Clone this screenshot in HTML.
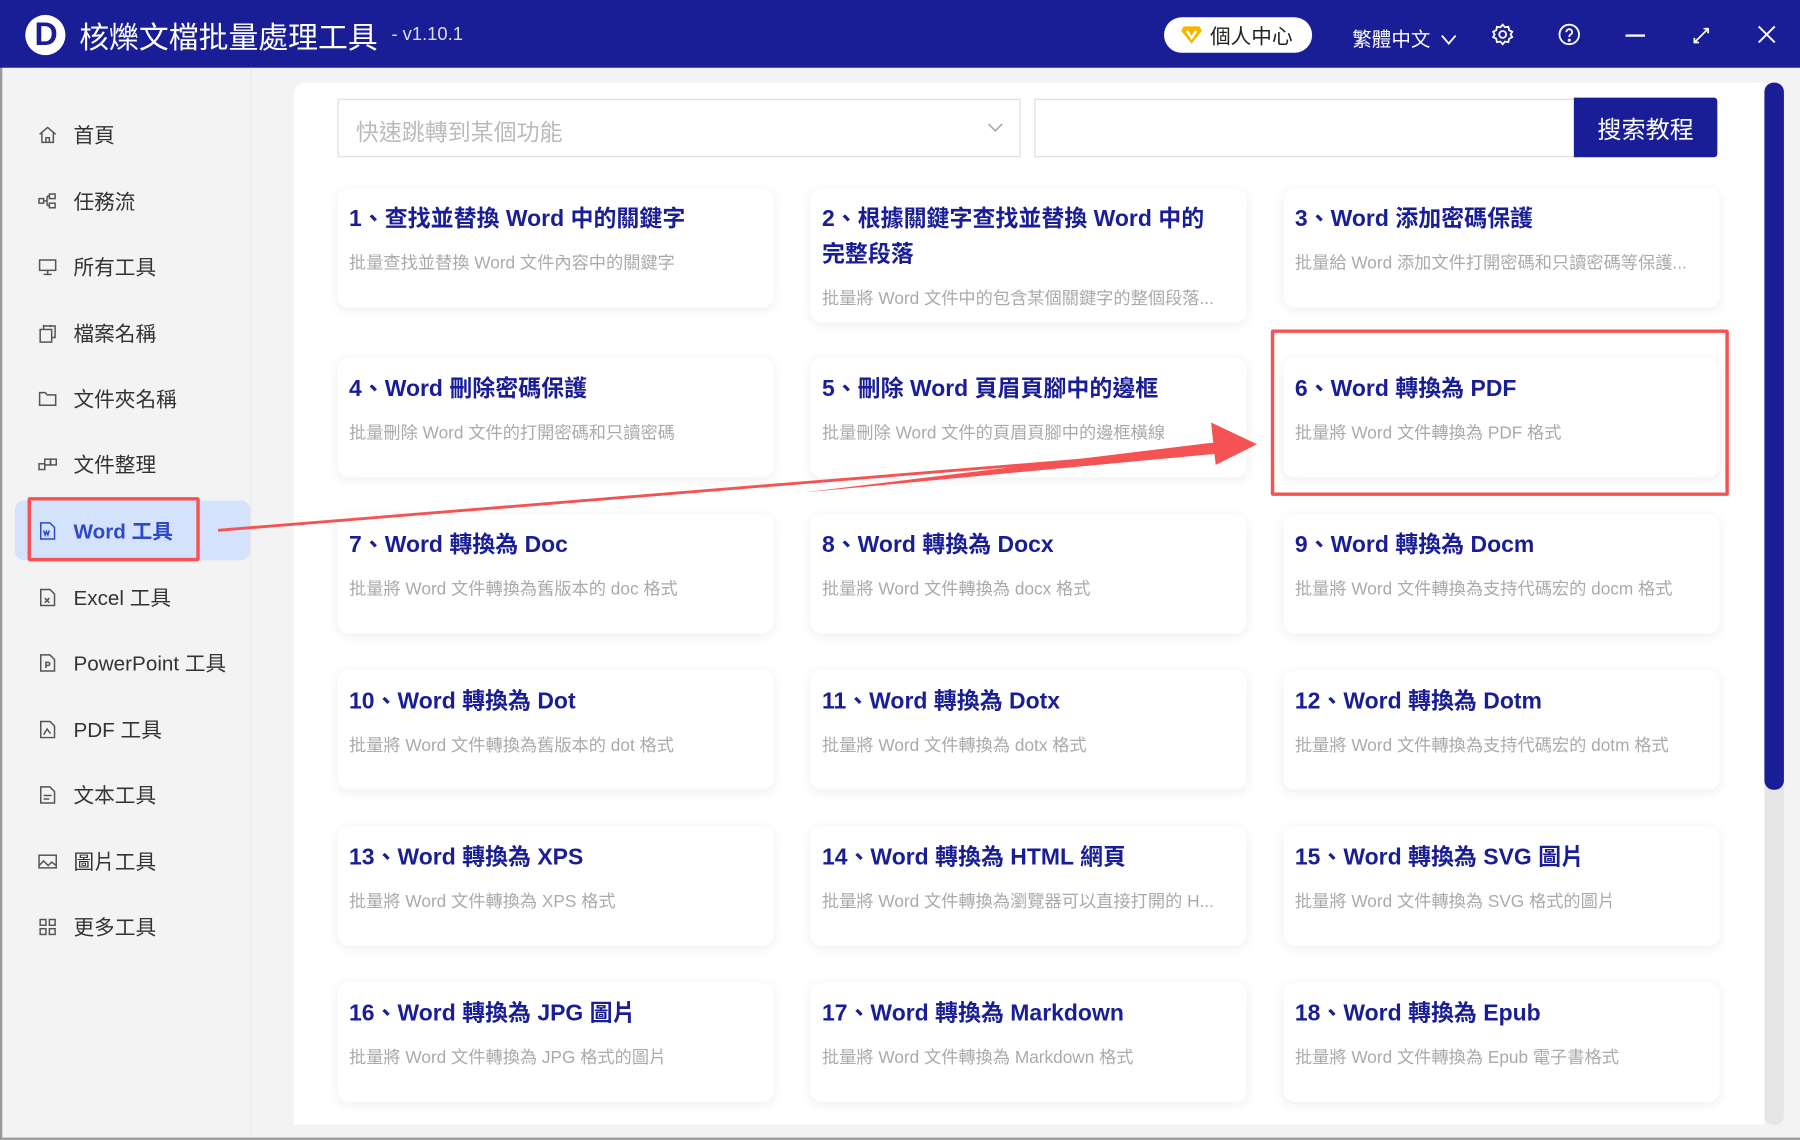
<!DOCTYPE html>
<html><head><meta charset="utf-8">
<style>
*{margin:0;padding:0;box-sizing:border-box}
html,body{width:1800px;height:1140px;overflow:hidden;background:#fff}
#w{width:1568px;height:993px;transform:scale(1.14796);transform-origin:0 0;position:relative;background:#f3f3f3;font-family:"Liberation Sans","Noto Sans CJK TC",sans-serif;box-shadow:inset 2px -2px 0 #999}
.hd{position:absolute;left:0;top:0;width:1568px;height:59px;background:#1a1e96;color:#fff}
.logo{position:absolute;left:22px;top:13px;width:35px;height:35px;border-radius:50%;background:#fff;}
.logo:after{content:"D";position:absolute;left:8px;top:1px;font:bold 28px "Liberation Sans",sans-serif;color:#1a1e96}
.ttl{position:absolute;left:69px;top:13px;font-size:26px}
.ver{position:absolute;left:341px;top:22px;font-size:16px;color:#dde}
.pill{position:absolute;left:1014px;top:15px;width:129px;height:31px;border-radius:16px;background:#fff;color:#222;font-size:18px;padding:3px 0 0 40px}
.pill svg{position:absolute;left:15px;top:7px}
.lang{position:absolute;left:1178px;top:20px;font-size:17px}
.sb{position:absolute;left:0;top:59px;width:219px;height:930px;border-right:1px solid #e8e8e8}
.it{position:absolute;left:33px;height:20px;font-size:18px;color:#333;display:flex;align-items:center}
.it svg{width:17px;height:17px;margin-right:14px;fill:none;stroke:#555;stroke-width:1.3}
.act{position:absolute;left:13px;top:436px;width:205px;height:52px;background:#d5e2fb;border-radius:8px}
.rb{position:absolute;border:3px solid #f55353;border-radius:2px}
.main{position:absolute;left:256px;top:72px;width:1281px;height:908px;background:#fff;border-radius:10px 0 0 0}
.sel{position:absolute;left:294px;top:86px;width:595px;height:51px;border:1px solid #ddd;font-size:20px;color:#bbb;padding:12px 0 0 15px}
.inp{position:absolute;left:901px;top:86px;width:471px;height:51px;border:1px solid #ddd;border-right:0}
.btn{position:absolute;left:1371px;top:85px;width:125px;height:52px;background:#1a1e96;color:#fff;font-size:21px;text-align:center;padding-top:12px;border-radius:0 3px 3px 0}
.card{position:absolute;width:380px;height:104px;background:#fff;border-radius:10px;box-shadow:0 2px 10px rgba(0,0,0,.07);padding:12px 10px}
.card b{display:block;font-size:20px;color:#1a1e96;line-height:31px;font-weight:bold}
.card p{font-size:15px;color:#aaa;margin-top:11px;white-space:nowrap;overflow:hidden}
.trk{position:absolute;left:1537px;top:72px;width:17px;height:908px;background:#e6e6e6;border-radius:8px}
.thm{position:absolute;left:1537px;top:72px;width:17px;height:616px;background:#1a1e96;border-radius:8px}
</style></head><body><div id="w">
<div class="hd">
<div class="logo"></div>
<div class="ttl">核爍文檔批量處理工具</div>
<div class="ver">- v1.10.1</div>
<div class="pill"><svg width="18" height="16" viewBox="0 0 18 16"><path d="M2 1h14l2 4-9 11L0 5z" fill="#f5b700"/><path d="M5 5l4 6 4-6" stroke="#fff" stroke-width="2" fill="none"/></svg>個人中心</div>
<div class="lang">繁體中文 <svg width="14" height="10" viewBox="0 0 14 10" style="margin-left:4px"><path d="M1 1l6 7 6-7" stroke="#fff" stroke-width="1.6" fill="none"/></svg></div>
<svg style="position:absolute;left:1299px;top:20px" width="20" height="20" viewBox="0 0 20 20" fill="none" stroke="#fff" stroke-width="1.6"><path d="M10 1.5l2 2.3 3-.5.6 3 2.7 1.4-1.4 2.3 1.4 2.3-2.7 1.4-.6 3-3-.5-2 2.3-2-2.3-3 .5-.6-3L1.7 12.3 3 10 1.7 7.7l2.7-1.4.6-3 3 .5z"/><circle cx="10" cy="10" r="3"/></svg>
<svg style="position:absolute;left:1357px;top:20px" width="20" height="20" viewBox="0 0 20 20" fill="none" stroke="#fff" stroke-width="1.6"><circle cx="10" cy="10" r="8.5"/><path d="M7.5 8a2.5 2.5 0 1 1 3.5 2.2c-.8.4-1 1-1 2"/><circle cx="10" cy="15" r=".6" fill="#fff"/></svg>
<div style="position:absolute;left:1416px;top:30px;width:17px;height:2px;background:#fff"></div>
<svg style="position:absolute;left:1474px;top:23px" width="16" height="16" viewBox="0 0 16 16" fill="none" stroke="#fff" stroke-width="1.5"><path d="M2 14l12-12M10 2h4v4M2 10v4h4"/></svg>
<svg style="position:absolute;left:1531px;top:22px" width="16" height="16" viewBox="0 0 16 16" stroke="#fff" stroke-width="1.7"><path d="M1 1l14 14M15 1L1 15"/></svg>
</div>
<div class="sb"></div>
<div class="act"></div>
<div class="it" style="top:107px"><svg viewBox="0 0 17 17"><path d="M1.5 8L8.5 2l7 6M3.5 6.5V15h10V6.5M7 15v-4h3v4"/></svg>首頁</div>
<div class="it" style="top:165px"><svg viewBox="0 0 17 17"><rect x="1" y="6" width="4" height="4"/><rect x="10" y="2" width="5" height="4"/><rect x="10" y="10" width="5" height="4"/><path d="M5 8h3M8 4v8M8 4h2M8 12h2"/></svg>任務流</div>
<div class="it" style="top:222px"><svg viewBox="0 0 17 17"><rect x="1.5" y="2.5" width="14" height="9"/><path d="M8.5 11.5v3M5 15h7"/></svg>所有工具</div>
<div class="it" style="top:280px"><svg viewBox="0 0 17 17"><rect x="2" y="5" width="10" height="11"/><path d="M5 5V2h10v10h-3M5 1v2M11 1v2"/></svg>檔案名稱</div>
<div class="it" style="top:337px"><svg viewBox="0 0 17 17"><path d="M1.5 3h5l1.5 2h7.5v9h-14z"/></svg>文件夾名稱</div>
<div class="it" style="top:394px"><svg viewBox="0 0 17 17"><rect x="1" y="8" width="5" height="5"/><rect x="6" y="4" width="5" height="5"/><rect x="11" y="4" width="5" height="5"/><path d="M6 9v4"/></svg>文件整理</div>
<div class="it" style="top:452px;color:#2d49c7;font-weight:bold"><svg viewBox="0 0 17 17" style="stroke:#2d49c7"><path d="M2.5 1.5h8l4 4v10h-12z"/><path d="M5 8l1.3 4 1.2-3 1.2 3L10 8"/></svg>Word 工具</div>
<div class="it" style="top:510px"><svg viewBox="0 0 17 17"><path d="M2.5 1.5h8l4 4v10h-12z"/><path d="M6 9l4 4M10 9l-4 4"/></svg>Excel 工具</div>
<div class="it" style="top:567px"><svg viewBox="0 0 17 17"><path d="M2.5 1.5h8l4 4v10h-12z"/><path d="M7 13V8h2a1.3 1.3 0 0 1 0 2.7H7"/></svg>PowerPoint 工具</div>
<div class="it" style="top:625px"><svg viewBox="0 0 17 17"><path d="M2.5 1.5h8l4 4v10h-12z"/><path d="M5 13l3-5 3 4"/></svg>PDF 工具</div>
<div class="it" style="top:682px"><svg viewBox="0 0 17 17"><path d="M2.5 1.5h8l4 4v10h-12z"/><path d="M5 9h7M5 12h5"/></svg>文本工具</div>
<div class="it" style="top:740px"><svg viewBox="0 0 17 17"><rect x="1" y="3" width="15" height="11"/><path d="M1 12l4-4 4 4 3-3 4 3"/></svg>圖片工具</div>
<div class="it" style="top:797px"><svg viewBox="0 0 17 17"><rect x="2" y="2" width="5" height="5"/><rect x="10" y="2" width="5" height="5"/><rect x="2" y="10" width="5" height="5"/><rect x="10" y="10" width="5" height="5"/></svg>更多工具</div>
<div class="rb" style="left:24px;top:433px;width:150px;height:56px"></div>

<div class="main"></div>
<div class="trk"></div><div class="thm"></div>
<div class="sel">快速跳轉到某個功能<svg style="position:absolute;right:14px;top:20px" width="14" height="9" viewBox="0 0 14 9"><path d="M1 1l6 6 6-6" stroke="#aaa" stroke-width="1.4" fill="none"/></svg></div>
<div class="inp"></div>
<div class="btn">搜索教程</div>

<div class="card" style="left:294px;top:164px"><b>1、查找並替換 Word 中的關鍵字</b><p>批量查找並替換 Word 文件內容中的關鍵字</p></div>
<div class="card" style="left:706px;top:164px;height:117px"><b>2、根據關鍵字查找並替換 Word 中的<br>完整段落</b><p>批量將 Word 文件中的包含某個關鍵字的整個段落...</p></div>
<div class="card" style="left:1118px;top:164px"><b>3、Word 添加密碼保護</b><p>批量給 Word 添加文件打開密碼和只讀密碼等保護...</p></div>
<div class="card" style="left:294px;top:312px"><b>4、Word 刪除密碼保護</b><p>批量刪除 Word 文件的打開密碼和只讀密碼</p></div>
<div class="card" style="left:706px;top:312px"><b>5、刪除 Word 頁眉頁腳中的邊框</b><p>批量刪除 Word 文件的頁眉頁腳中的邊框橫線</p></div>
<div class="card" style="left:1118px;top:312px"><b>6、Word 轉換為 PDF</b><p>批量將 Word 文件轉換為 PDF 格式</p></div>
<div class="card" style="left:294px;top:448px"><b>7、Word 轉換為 Doc</b><p>批量將 Word 文件轉換為舊版本的 doc 格式</p></div>
<div class="card" style="left:706px;top:448px"><b>8、Word 轉換為 Docx</b><p>批量將 Word 文件轉換為 docx 格式</p></div>
<div class="card" style="left:1118px;top:448px"><b>9、Word 轉換為 Docm</b><p>批量將 Word 文件轉換為支持代碼宏的 docm 格式</p></div>
<div class="card" style="left:294px;top:584px"><b>10、Word 轉換為 Dot</b><p>批量將 Word 文件轉換為舊版本的 dot 格式</p></div>
<div class="card" style="left:706px;top:584px"><b>11、Word 轉換為 Dotx</b><p>批量將 Word 文件轉換為 dotx 格式</p></div>
<div class="card" style="left:1118px;top:584px"><b>12、Word 轉換為 Dotm</b><p>批量將 Word 文件轉換為支持代碼宏的 dotm 格式</p></div>
<div class="card" style="left:294px;top:720px"><b>13、Word 轉換為 XPS</b><p>批量將 Word 文件轉換為 XPS 格式</p></div>
<div class="card" style="left:706px;top:720px"><b>14、Word 轉換為 HTML 網頁</b><p>批量將 Word 文件轉換為瀏覽器可以直接打開的 H...</p></div>
<div class="card" style="left:1118px;top:720px"><b>15、Word 轉換為 SVG 圖片</b><p>批量將 Word 文件轉換為 SVG 格式的圖片</p></div>
<div class="card" style="left:294px;top:856px"><b>16、Word 轉換為 JPG 圖片</b><p>批量將 Word 文件轉換為 JPG 格式的圖片</p></div>
<div class="card" style="left:706px;top:856px"><b>17、Word 轉換為 Markdown</b><p>批量將 Word 文件轉換為 Markdown 格式</p></div>
<div class="card" style="left:1118px;top:856px"><b>18、Word 轉換為 Epub</b><p>批量將 Word 文件轉換為 Epub 電子書格式</p></div>

<div class="rb" style="left:1107px;top:287px;width:399px;height:145px"></div>
<svg style="position:absolute;left:0;top:0" width="1568" height="993"><path d="M190 462L1062 391" stroke="#f55353" stroke-width="2.5" fill="none"/><path d="M700 429L1062 395 1061 385z" fill="#f55353"/><path d="M1095 387L1055 368 1059 405z" fill="#f55353"/></svg>
</div></body></html>
